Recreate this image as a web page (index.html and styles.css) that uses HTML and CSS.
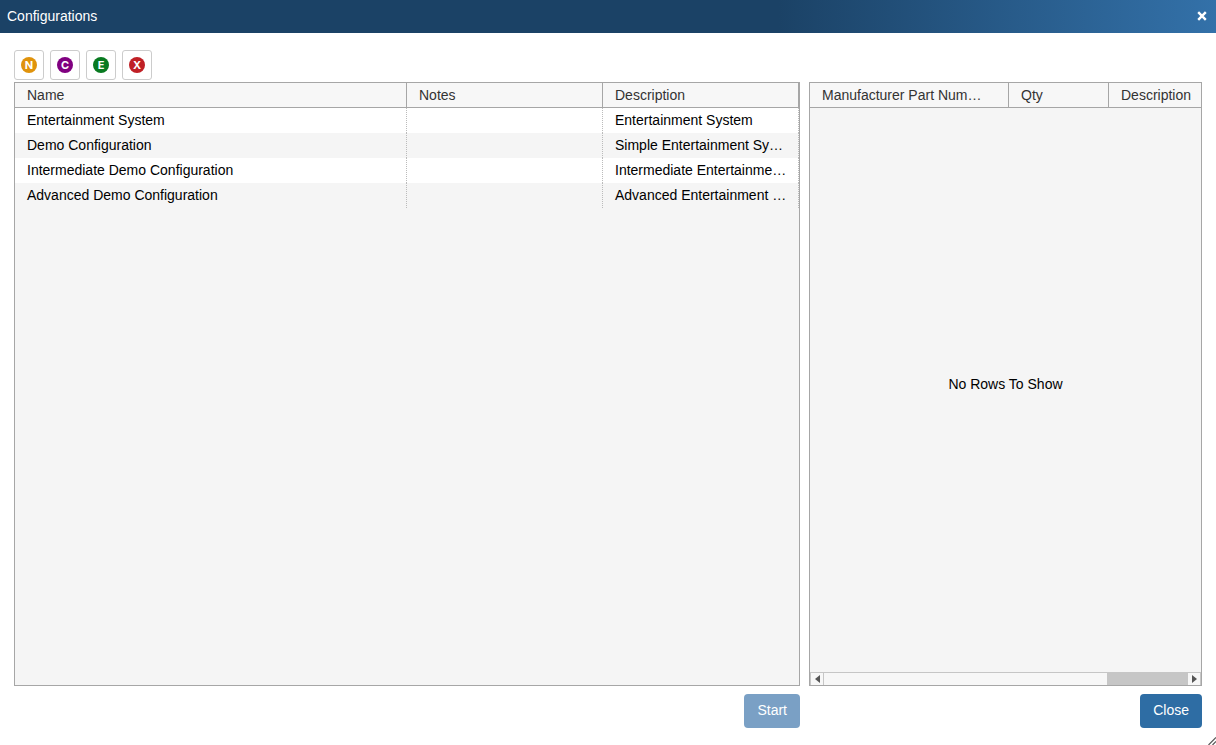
FILE: index.html
```html
<!DOCTYPE html>
<html lang="en">
<head>
  <meta charset="UTF-8">
  <meta name="viewport" content="width=device-width, initial-scale=1.0">
  <title>Configurations</title>
  <link rel="stylesheet" href="styles.css">
</head>
<body>
  <div class="dialog">
    <header class="dialog-header">
      <h1 class="dialog-title">Configurations</h1>
      <button type="button" class="dialog-close" aria-label="Close dialog">
        <svg width="10" height="10" viewBox="0 0 10 10"><path d="M1.2 1.2l7.6 7.6M8.8 1.2L1.2 8.8" stroke="#fff" stroke-width="2.4"/></svg>
      </button>
    </header>

    <div class="toolbar">
      <button type="button" class="tool-btn"><span class="badge badge-new">N</span></button>
      <button type="button" class="tool-btn"><span class="badge badge-copy">C</span></button>
      <button type="button" class="tool-btn"><span class="badge badge-edit">E</span></button>
      <button type="button" class="tool-btn"><span class="badge badge-delete">X</span></button>
    </div>

    <main class="panels">
      <section class="grid-box">
        <table class="grid">
          <colgroup>
            <col class="col-name">
            <col class="col-notes">
            <col class="col-desc">
          </colgroup>
          <thead>
            <tr><th>Name</th><th>Notes</th><th>Description</th></tr>
          </thead>
          <tbody>
            <tr><td>Entertainment System</td><td></td><td>Entertainment System</td></tr>
            <tr><td>Demo Configuration</td><td></td><td>Simple Entertainment System</td></tr>
            <tr><td>Intermediate Demo Configuration</td><td></td><td>Intermediate Entertainment System</td></tr>
            <tr><td>Advanced Demo Configuration</td><td></td><td>Advanced Entertainment System</td></tr>
          </tbody>
        </table>
      </section>

      <section class="grid-box">
        <div class="grid-view">
          <table class="grid grid-parts">
            <colgroup>
              <col class="col-part">
              <col class="col-qty">
              <col class="col-part-desc">
            </colgroup>
            <thead>
              <tr><th>Manufacturer Part Number</th><th>Qty</th><th>Description</th></tr>
            </thead>
          </table>
        </div>
        <div class="hscroll">
          <button type="button" class="hscroll-btn" aria-label="Scroll left">
            <svg width="5" height="8" viewBox="0 0 5 8"><path d="M5 0v8L0 4z" fill="#555"/></svg>
          </button>
          <div class="hscroll-track"><div class="hscroll-thumb"></div></div>
          <button type="button" class="hscroll-btn" aria-label="Scroll right">
            <svg width="5" height="8" viewBox="0 0 5 8"><path d="M0 0v8l5-4z" fill="#555"/></svg>
          </button>
        </div>
        <div class="grid-overlay">No Rows To Show</div>
      </section>
    </main>

    <footer class="dialog-footer">
      <div class="footer-cell"><button type="button" class="btn" disabled>Start</button></div>
      <div class="footer-cell"><button type="button" class="btn">Close</button></div>
    </footer>

    <svg class="resize-grip" width="8" height="8" viewBox="0 0 8 8"><path d="M0.5 8L8 0.5M4.5 8L8 4.5" stroke="#555" stroke-width="1.2"/></svg>
  </div>
</body>
</html>
```

FILE: styles.css
```css
* {
  box-sizing: border-box;
}

body {
  margin: 0;
  background: #fff;
  color: #000;
  font-family: "Liberation Sans", Arial, sans-serif;
  font-size: 14px;
  line-height: 20px;
}

button {
  font: inherit;
  cursor: pointer;
}

.dialog {
  position: relative;
  display: flex;
  flex-direction: column;
  height: 100vh;
  overflow: hidden;
}

/* header */
.dialog-header {
  display: flex;
  align-items: center;
  justify-content: space-between;
  height: 33px;
  padding: 0 9px 2px 7px;
  background: linear-gradient(to right, #1b4266 0%, #1b4266 64%, #3371a9 100%);
  color: #fff;
}

.dialog-title {
  margin: 0;
  font-size: 14px;
  font-weight: normal;
}

.dialog-close {
  display: flex;
  padding: 0;
  border: 0;
  background: none;
}

/* toolbar */
.toolbar {
  display: flex;
  gap: 6px;
  padding: 17px 14px 2px;
}

.tool-btn {
  display: flex;
  align-items: center;
  justify-content: center;
  width: 30px;
  height: 30px;
  padding: 0;
  border: 1px solid #ccc;
  border-radius: 3px;
  background: #fff;
}

.badge {
  width: 16px;
  height: 16px;
  border-radius: 50%;
  color: #fff;
  font-family: Inter, sans-serif;
  font-size: 11px;
  font-weight: 700;
  line-height: 16px;
  text-align: center;
}

.badge-new { background: #e0930c; }
.badge-copy { background: #800080; }
.badge-edit { background: #087a20; }
.badge-delete { background: #c02026; }

/* grids */
.panels,
.dialog-footer {
  display: grid;
  grid-template-columns: 2fr 1fr;
  gap: 9px;
  padding: 0 14px;
}

.panels {
  flex: 1;
  min-height: 0;
}

.grid-box {
  position: relative;
  display: flex;
  flex-direction: column;
  min-width: 0;
  border: 1px solid #a6a6a6;
  background: #f5f5f5;
}

.grid {
  width: 100%;
  table-layout: fixed;
  border-collapse: separate;
  border-spacing: 0;
}

.grid th,
.grid td {
  height: 25px;
  padding: 0 10px 0 12px;
  line-height: 24px;
  overflow: hidden;
  text-align: left;
  text-overflow: ellipsis;
  vertical-align: top;
  white-space: nowrap;
}

.grid th {
  border-right: 1px solid #a6a6a6;
  border-bottom: 1px solid #a6a6a6;
  background: #f7f7f7;
  color: #333;
  font-weight: normal;
}

.grid td {
  border-right: 1px dotted #bbb;
}

.grid tbody tr:nth-child(odd) {
  background: #fff;
}

.col-name { width: 50%; }
.col-notes { width: 25%; }
.col-desc { width: 25%; }

.grid-view {
  flex: 1;
  overflow: hidden;
}

/* wider than its box, the last column runs out of view */
.grid-parts { width: 499px; }
.grid-parts th { padding-right: 24px; }
.col-part { width: 199px; }
.col-qty { width: 100px; }
.col-part-desc { width: 200px; }

.grid-overlay {
  position: absolute;
  inset: 0;
  display: flex;
  align-items: center;
  justify-content: center;
  pointer-events: none;
}

.hscroll {
  display: flex;
  height: 13px;
  border-top: 1px solid #c6c6c6;
  background: #f7f7f7;
}

.hscroll-btn {
  display: flex;
  align-items: center;
  justify-content: center;
  width: 14px;
  padding: 0;
  border: 1px solid #c6c6c6;
  border-width: 0 1px;
  background: #f7f7f7;
}

.hscroll-track {
  display: flex;
  flex: 1;
  justify-content: flex-end;
}

.hscroll-thumb {
  width: 22%;
  background: #c6c6c6;
}

/* footer */
.dialog-footer {
  padding-top: 8px;
  padding-bottom: 17px;
}

.footer-cell {
  display: flex;
  justify-content: flex-end;
}

.btn {
  height: 34px;
  padding: 0 13px 2px;
  border: 0;
  border-radius: 4px;
  background: #2e6da4;
  color: #fff;
}

.btn:disabled {
  background: #7aa0c5;
  cursor: default;
}

.resize-grip {
  position: absolute;
  right: 0;
  bottom: 0;
}
```
